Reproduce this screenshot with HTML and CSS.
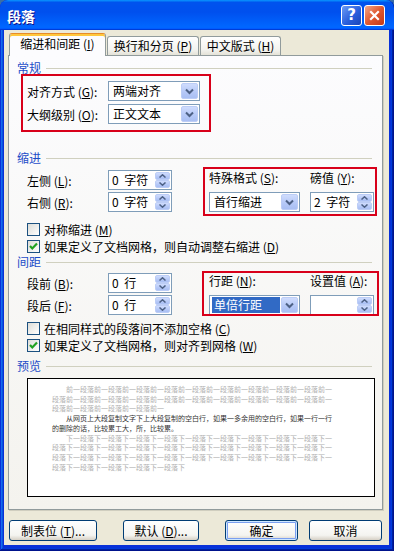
FILE: index.html
```html
<!DOCTYPE html>
<html lang="zh-CN">
<head>
    <meta charset="UTF-8">
    <meta name="viewport" content="width=device-width, initial-scale=1.0">
    <title>段落</title>
    <link rel="stylesheet" href="styles.css">
</head>
<body>
<div class="window">
    <!-- Title bar -->
    <div class="titlebar">
        <span class="title">段落</span>
        <div class="caption-buttons">
            <span class="cap-btn help">?</span>
            <span class="cap-btn close">
                <svg width="13" height="13" viewBox="0 0 13 13"><path d="M3 3 L10 10 M10 3 L3 10" stroke="#fff" stroke-width="2.2" stroke-linecap="square"/></svg>
            </span>
        </div>
    </div>

    <div class="client">
        <!-- Tabs -->
        <div class="tabs">
            <div class="tab active">缩进和间距 (<u>I</u>)</div>
            <div class="tab tab-2">换行和分页 (<u>P</u>)</div>
            <div class="tab tab-3">中文版式 (<u>H</u>)</div>
        </div>

        <div class="panel">
            <!-- General -->
            <div class="group-title">常规</div>
            <div class="group-body general">
                <div class="field-row">
                    <span class="label">对齐方式 (<u>G</u>):</span>
                    <div class="combo"><span class="combo-text">两端对齐</span><span class="drop-btn"><svg width="9" height="7" viewBox="0 0 9 7"><polyline points="1,1.5 4.5,5 8,1.5" fill="none" stroke="#4D6185" stroke-width="2"/></svg></span></div>
                </div>
                <div class="field-row">
                    <span class="label">大纲级别 (<u>O</u>):</span>
                    <div class="combo"><span class="combo-text">正文文本</span><span class="drop-btn"><svg width="9" height="7" viewBox="0 0 9 7"><polyline points="1,1.5 4.5,5 8,1.5" fill="none" stroke="#4D6185" stroke-width="2"/></svg></span></div>
                </div>
            </div>

            <!-- Indent -->
            <div class="group-title indent-title">缩进</div>
            <div class="group-body">
                <div class="split">
                    <div class="left-fields">
                        <div class="field-row">
                            <span class="label">左侧 (<u>L</u>):</span>
                            <div class="spin"><span class="spin-text">0 字符</span><span class="spin-btns"><span class="spin-half"><svg width="7" height="4" viewBox="0 0 7 4"><polyline points="0.5,3.5 3.5,0.8 6.5,3.5" fill="none" stroke="#4D6185" stroke-width="1.5"/></svg></span><span class="spin-half"><svg width="7" height="4" viewBox="0 0 7 4"><polyline points="0.5,0.5 3.5,3.2 6.5,0.5" fill="none" stroke="#4D6185" stroke-width="1.5"/></svg></span></span></div>
                        </div>
                        <div class="field-row">
                            <span class="label">右侧 (<u>R</u>):</span>
                            <div class="spin"><span class="spin-text">0 字符</span><span class="spin-btns"><span class="spin-half"><svg width="7" height="4" viewBox="0 0 7 4"><polyline points="0.5,3.5 3.5,0.8 6.5,3.5" fill="none" stroke="#4D6185" stroke-width="1.5"/></svg></span><span class="spin-half"><svg width="7" height="4" viewBox="0 0 7 4"><polyline points="0.5,0.5 3.5,3.2 6.5,0.5" fill="none" stroke="#4D6185" stroke-width="1.5"/></svg></span></span></div>
                        </div>
                    </div>
                    <div class="right-fields">
                        <div class="right-labels">
                            <span class="right-label">特殊格式 (<u>S</u>):</span>
                            <span>磅值 (<u>Y</u>):</span>
                        </div>
                        <div class="right-controls">
                            <div class="combo combo-small"><span class="combo-text">首行缩进</span><span class="drop-btn"><svg width="9" height="7" viewBox="0 0 9 7"><polyline points="1,1.5 4.5,5 8,1.5" fill="none" stroke="#4D6185" stroke-width="2"/></svg></span></div>
                            <div class="spin"><span class="spin-text">2 字符</span><span class="spin-btns"><span class="spin-half"><svg width="7" height="4" viewBox="0 0 7 4"><polyline points="0.5,3.5 3.5,0.8 6.5,3.5" fill="none" stroke="#4D6185" stroke-width="1.5"/></svg></span><span class="spin-half"><svg width="7" height="4" viewBox="0 0 7 4"><polyline points="0.5,0.5 3.5,3.2 6.5,0.5" fill="none" stroke="#4D6185" stroke-width="1.5"/></svg></span></span></div>
                        </div>
                    </div>
                </div>
                <div class="checks indent-checks">
                    <div class="check-row"><span class="check"></span>对称缩进 (<u>M</u>)</div>
                    <div class="check-row"><span class="check"><svg width="11" height="11" viewBox="0 0 11 11"><polyline points="2,5 4.3,7.5 9,2.5" fill="none" stroke="#21A121" stroke-width="2.2"/></svg></span>如果定义了文档网格，则自动调整右缩进 (<u>D</u>)</div>
                </div>
            </div>

            <!-- Spacing -->
            <div class="group-title">间距</div>
            <div class="group-body">
                <div class="split spacing-split">
                    <div class="left-fields">
                        <div class="field-row">
                            <span class="label">段前 (<u>B</u>):</span>
                            <div class="spin"><span class="spin-text">0 行</span><span class="spin-btns"><span class="spin-half"><svg width="7" height="4" viewBox="0 0 7 4"><polyline points="0.5,3.5 3.5,0.8 6.5,3.5" fill="none" stroke="#4D6185" stroke-width="1.5"/></svg></span><span class="spin-half"><svg width="7" height="4" viewBox="0 0 7 4"><polyline points="0.5,0.5 3.5,3.2 6.5,0.5" fill="none" stroke="#4D6185" stroke-width="1.5"/></svg></span></span></div>
                        </div>
                        <div class="field-row">
                            <span class="label">段后 (<u>F</u>):</span>
                            <div class="spin"><span class="spin-text">0 行</span><span class="spin-btns"><span class="spin-half"><svg width="7" height="4" viewBox="0 0 7 4"><polyline points="0.5,3.5 3.5,0.8 6.5,3.5" fill="none" stroke="#4D6185" stroke-width="1.5"/></svg></span><span class="spin-half"><svg width="7" height="4" viewBox="0 0 7 4"><polyline points="0.5,0.5 3.5,3.2 6.5,0.5" fill="none" stroke="#4D6185" stroke-width="1.5"/></svg></span></span></div>
                        </div>
                    </div>
                    <div class="right-fields">
                        <div class="right-labels">
                            <span class="right-label">行距 (<u>N</u>):</span>
                            <span>设置值 (<u>A</u>):</span>
                        </div>
                        <div class="right-controls">
                            <div class="combo combo-small"><span class="combo-text selected">单倍行距</span><span class="drop-btn"><svg width="9" height="7" viewBox="0 0 9 7"><polyline points="1,1.5 4.5,5 8,1.5" fill="none" stroke="#4D6185" stroke-width="2"/></svg></span></div>
                            <div class="spin"><span class="spin-text"></span><span class="spin-btns"><span class="spin-half"><svg width="7" height="4" viewBox="0 0 7 4"><polyline points="0.5,3.5 3.5,0.8 6.5,3.5" fill="none" stroke="#4D6185" stroke-width="1.5"/></svg></span><span class="spin-half"><svg width="7" height="4" viewBox="0 0 7 4"><polyline points="0.5,0.5 3.5,3.2 6.5,0.5" fill="none" stroke="#4D6185" stroke-width="1.5"/></svg></span></span></div>
                        </div>
                    </div>
                </div>
                <div class="checks">
                    <div class="check-row"><span class="check"></span>在相同样式的段落间不添加空格 (<u>C</u>)</div>
                    <div class="check-row"><span class="check"><svg width="11" height="11" viewBox="0 0 11 11"><polyline points="2,5 4.3,7.5 9,2.5" fill="none" stroke="#21A121" stroke-width="2.2"/></svg></span>如果定义了文档网格，则对齐到网格 (<u>W</u>)</div>
                </div>
            </div>

            <!-- Preview -->
            <div class="group-title preview-title">预览</div>
            <div class="group-body">
                <div class="preview">
                    <p class="ghost">前一段落前一段落前一段落前一段落前一段落前一段落前一段落前一段落前一段落前一段落前一段落前一段落前一段落前一段落前一段落前一段落前一段落前一段落前一段落前一段落前一段落前一段落前一段落前一</p>
                    <p class="current">从网页上大段复制文字下上大段复制的空白行，如果一多余用的空白行，如果一行一行的删除的话，比较累工大，所，比较累。</p>
                    <p class="ghost">下一段落下一段落下一段落下一段落下一段落下一段落下一段落下一段落下一段落下一段落下一段落下一段落下一段落下一段落下一段落下一段落下一段落下一段落下一段落下一段落下一段落下一段落下一段落下一段落下一段落下一段落下一段落下一段落下一段落下一段落下一段落下一段落下一段落下一段落下</p>
                </div>
            </div>

            <!-- Red annotation boxes drawn over the dialog -->
            <div class="mark mark-general"></div>
            <div class="mark mark-indent"></div>
            <div class="mark mark-spacing"></div>
        </div>

        <!-- Bottom buttons -->
        <div class="buttons">
            <span class="btn btn-tabs">制表位 (<u>T</u>)...</span>
            <span class="btn btn-default">默认 (<u>D</u>)...</span>
            <span class="btn btn-ok">确定</span>
            <span class="btn btn-cancel">取消</span>
        </div>
    </div>
</div>
</body>
</html>
```

FILE: styles.css
```css
/* Windows XP style paragraph dialog */
body {
    margin: 0;
    background: #3a6ea5;
    font-family: "Noto Sans CJK SC", sans-serif;
    font-size: 12px;
    color: #000;
}
u {
    text-underline-offset: 1px;
}

.window {
    width: 394px;
    height: 551px;
    display: flex;
    flex-direction: column;
    background: #0831d9;
    border-radius: 8px 8px 0 0;
    overflow: hidden;
    box-shadow: inset -1px -1px #00138c, inset 1px 1px #0831d9, inset -2px -2px #001ea0,
        inset 2px 2px #166aee, inset -3px -3px #003bda, inset 3px 3px #0855dd;
}

/* Title bar */
.titlebar {
    height: 30px;
    flex: none;
    display: flex;
    align-items: center;
    padding: 0 9px 0 7px;
    background: linear-gradient(180deg, #0997ff, #0053ee 8%, #0050ee 40%, #06f 88%, #06f 93%, #005bff 95%, #003dd7 96%, #003dd7);
    border-radius: 8px 8px 0 0;
}
.title {
    flex: 1;
    color: #fff;
    font-weight: bold;
    font-size: 14px;
    text-shadow: 1px 1px #0f1089;
    padding-top: 1px;
}
.caption-buttons {
    display: flex;
    gap: 2px;
}
.cap-btn {
    width: 21px;
    height: 21px;
    box-sizing: border-box;
    border: 1px solid #fff;
    border-radius: 3px;
    display: flex;
    align-items: center;
    justify-content: center;
}
.help {
    background: linear-gradient(135deg, #6c9cf6, #2a5fdc 55%, #1a44b8);
    color: #fff;
    font: bold 15px "DejaVu Sans", sans-serif;
}
.close {
    background: linear-gradient(135deg, #f0a88a, #e0582f 50%, #c53817);
}

/* Client area */
.client {
    flex: 1;
    margin: 0 5px 6px 4px;
    padding: 3px 0 0 4px;
    background: #ece9d8;
    display: flex;
    flex-direction: column;
}

/* Tabs */
.tabs {
    display: flex;
    align-items: flex-end;
    gap: 1px;
    height: 22px;
    padding-left: 1px;
}
.tab {
    height: 19px;
    box-sizing: border-box;
    border: 1px solid #919b9c;
    border-bottom: none;
    border-radius: 3px 3px 0 0;
    background: linear-gradient(#fff, #f3f3ef 70%, #e4e2d7);
    display: flex;
    align-items: center;
    justify-content: center;
    line-height: 1;
    white-space: nowrap;
}
.tab.active {
    width: 97px;
    height: 23px;
    margin-bottom: -1px;
    position: relative;
    z-index: 1;
    background: #fcfcfe;
    border-top-color: #e68b2c;
    box-shadow: inset 0 2px #ffc73c;
    padding-bottom: 2px;
}
.tab-2 {
    width: 92px;
}
.tab-3 {
    width: 81px;
}

/* Tab page */
.panel {
    position: relative;
    width: 375px;
    height: 455px;
    box-sizing: border-box;
    border: 1px solid #919b9c;
    background: linear-gradient(#fcfcfe, #f4f3ee);
    box-shadow: 1px 1px 0 #d0cebf;
    padding: 5px 0 0 8px;
}
.group-title {
    display: flex;
    align-items: center;
    width: 355px;
    height: 14px;
    line-height: 14px;
    color: #1c4cc8;
}
.group-title::after {
    content: "";
    flex: 1;
    border-top: 1px solid #d0d0bf;
    margin-left: 5px;
}
.group-body {
    padding-left: 10px;
}
.indent-title {
    margin-top: 27px;
}
.general {
    display: flex;
    flex-direction: column;
    gap: 3px;
    margin-top: 6px;
}

.field-row {
    display: flex;
    align-items: center;
    height: 20px;
}
.label {
    width: 81px;
    white-space: nowrap;
}

/* Combo box */
.combo {
    width: 92px;
    height: 20px;
    box-sizing: border-box;
    border: 1px solid #7f9db9;
    background: #fff;
    padding: 1px;
    display: flex;
    align-items: center;
}
.combo-small {
    width: 91px;
}
.combo-text {
    flex: 1;
    height: 16px;
    line-height: 16px;
    padding-left: 3px;
    margin-right: 1px;
}
.combo-text.selected {
    background: #316ac5;
    color: #fff;
    margin-left: 1px;
    padding-left: 2px;
}
.drop-btn {
    width: 15px;
    height: 14px;
    border: 1px solid #bccdf6;
    border-radius: 2px;
    background: linear-gradient(#cfdcfd, #b5c8f7 60%, #a9bff3);
    display: flex;
    align-items: center;
    justify-content: center;
}

/* Spin box */
.spin {
    width: 64px;
    height: 20px;
    box-sizing: border-box;
    border: 1px solid #7f9db9;
    background: #fff;
    padding: 1px;
    display: flex;
}
.spin-text {
    flex: 1;
    line-height: 16px;
    padding-left: 2px;
    word-spacing: 3px;
}
.spin-btns {
    width: 15px;
    display: flex;
    flex-direction: column;
}
.spin-half {
    flex: 1;
    border: 1px solid #bccdf6;
    border-radius: 2px;
    background: linear-gradient(#cfdcfd, #b5c8f7 60%, #a9bff3);
    display: flex;
    align-items: center;
    justify-content: center;
}

/* Left fields + right fields */
.split {
    display: flex;
    margin-top: 5px;
}
.spacing-split {
    margin-top: 4px;
}
.left-fields {
    display: flex;
    flex-direction: column;
    gap: 2px;
    width: 145px;
}
.right-fields {
    margin-left: 37px;
    display: flex;
    flex-direction: column;
    justify-content: flex-end;
}
.right-labels {
    display: flex;
    height: 14px;
    line-height: 14px;
    margin-bottom: 7px;
    white-space: nowrap;
}
.right-label {
    width: 101px;
}
.right-controls {
    display: flex;
    gap: 10px;
}

/* Checkboxes */
.checks {
    margin-top: 5px;
}
.indent-checks {
    margin-top: 9px;
}
.check-row {
    display: flex;
    align-items: center;
    height: 17px;
    white-space: nowrap;
}
.check {
    width: 13px;
    height: 13px;
    box-sizing: border-box;
    border: 1px solid #1c5180;
    background: linear-gradient(135deg, #dcdcd7, #fff);
    margin-right: 4px;
    display: flex;
    align-items: center;
    justify-content: center;
}

/* Preview */
.preview-title {
    margin-top: 5px;
}
.preview {
    margin-top: 5px;
    width: 348px;
    height: 119px;
    box-sizing: border-box;
    border: 1px solid #000;
    background: #fff;
    padding: 6px 0 0 24px;
}
.preview p {
    margin: 0;
    width: 281px;
    font-size: 7px;
    line-height: 9.7px;
    text-indent: 14px;
}
.ghost {
    color: #b0b0b0;
}
.current {
    color: #333;
}

/* Red annotation boxes */
.mark {
    position: absolute;
    border: 2px solid #d8001a;
}
.mark-general {
    left: 12px;
    top: 18px;
    width: 186px;
    height: 54px;
}
.mark-indent {
    left: 194px;
    top: 111px;
    width: 170px;
    height: 45px;
}
.mark-spacing {
    left: 193px;
    top: 215px;
    width: 173px;
    height: 41px;
}

/* Buttons */
.buttons {
    display: flex;
    margin-top: 10px;
}
.btn {
    height: 21px;
    box-sizing: border-box;
    border: 1px solid #003c74;
    border-radius: 3px;
    background: linear-gradient(#fff, #f4f4f0 75%, #d6d0c5);
    display: flex;
    align-items: center;
    justify-content: center;
    white-space: nowrap;
}
.btn-tabs {
    width: 88px;
    margin-left: 1px;
}
.btn-default {
    width: 76px;
    margin-left: 26px;
}
.btn-ok {
    width: 73px;
    margin-left: 26px;
    box-shadow: inset 0 0 0 1px #cee7ff, inset 0 0 0 2px #7b9ff0;
}
.btn-cancel {
    width: 73px;
    margin-left: 11px;
}
```
